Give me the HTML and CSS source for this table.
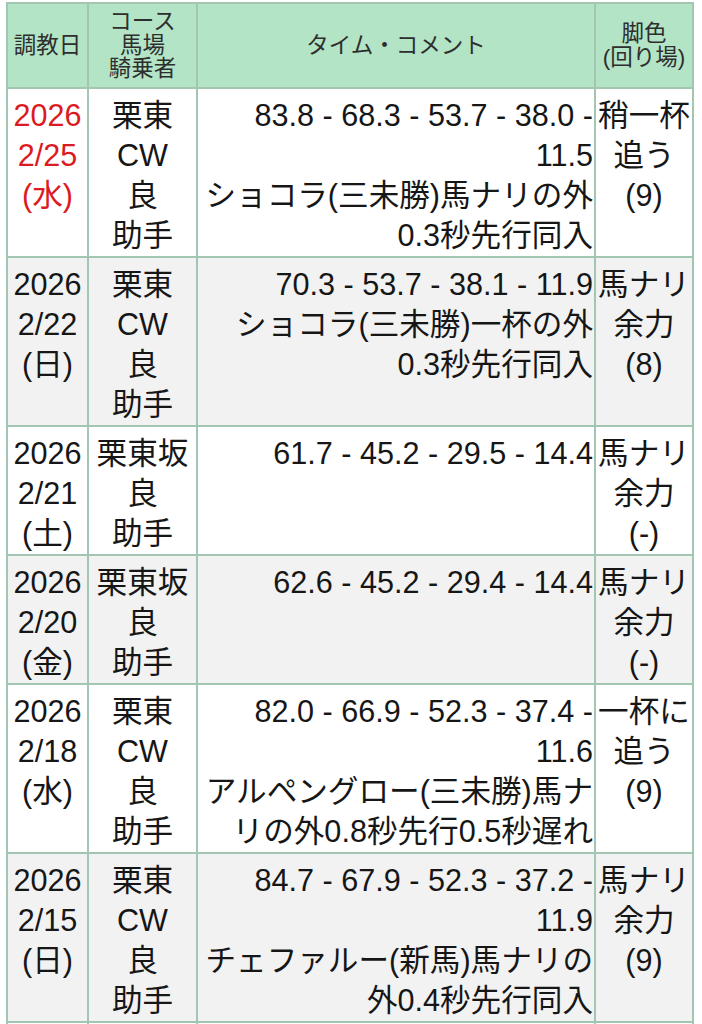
FILE: index.html
```html
<!DOCTYPE html>
<html lang="ja">
<head>
<meta charset="utf-8">
<title>調教</title>
<link rel="stylesheet" href="styles.css">
</head>
<body>
<table class="chokyo">
  <colgroup>
    <col class="c-date">
    <col class="c-course">
    <col class="c-time">
    <col class="c-ashi">
  </colgroup>
  <thead>
    <tr>
      <th>調教日</th>
      <th>コース<br>馬場<br>騎乗者</th>
      <th>タイム・コメント</th>
      <th>脚色<br>(回り場)</th>
    </tr>
  </thead>
  <tbody>
    <tr>
      <td class="date latest">2026<br>2/25<br>(水)</td>
      <td class="course">栗東<br>CW<br>良<br>助手</td>
      <td class="time">83.8 - 68.3 - 53.7 - 38.0 - 11.5<br>ショコラ(三未勝)馬ナリの外0.3秒先行同入</td>
      <td class="ashi">稍一杯<br>追う<br>(9)</td>
    </tr>
    <tr>
      <td class="date">2026<br>2/22<br>(日)</td>
      <td class="course">栗東<br>CW<br>良<br>助手</td>
      <td class="time">70.3 - 53.7 - 38.1 - 11.9<br>ショコラ(三未勝)一杯の外0.3秒先行同入</td>
      <td class="ashi">馬ナリ<br>余力<br>(8)</td>
    </tr>
    <tr>
      <td class="date">2026<br>2/21<br>(土)</td>
      <td class="course">栗東坂<br>良<br>助手</td>
      <td class="time">61.7 - 45.2 - 29.5 - 14.4</td>
      <td class="ashi">馬ナリ<br>余力<br>(-)</td>
    </tr>
    <tr>
      <td class="date">2026<br>2/20<br>(金)</td>
      <td class="course">栗東坂<br>良<br>助手</td>
      <td class="time">62.6 - 45.2 - 29.4 - 14.4</td>
      <td class="ashi">馬ナリ<br>余力<br>(-)</td>
    </tr>
    <tr>
      <td class="date">2026<br>2/18<br>(水)</td>
      <td class="course">栗東<br>CW<br>良<br>助手</td>
      <td class="time">82.0 - 66.9 - 52.3 - 37.4 - 11.6<br>アルペングロー(三未勝)馬ナリの外0.8秒先行0.5秒遅れ</td>
      <td class="ashi">一杯に<br>追う<br>(9)</td>
    </tr>
    <tr>
      <td class="date">2026<br>2/15<br>(日)</td>
      <td class="course">栗東<br>CW<br>良<br>助手</td>
      <td class="time">84.7 - 67.9 - 52.3 - 37.2 - 11.9<br>チェファルー(新馬)馬ナリの外0.4秒先行同入</td>
      <td class="ashi">馬ナリ<br>余力<br>(9)</td>
    </tr>
    <tr>
      <td class="date">2026<br>2/12<br>(木)</td>
      <td class="course">栗東坂<br>良<br>助手</td>
      <td class="time">60.9 - 44.8 - 29.3 - 14.5</td>
      <td class="ashi">馬ナリ<br>余力<br>(-)</td>
    </tr>
  </tbody>
</table>
</body>
</html>
```
FILE: styles.css
```css
html, body {
  margin: 0;
  padding: 0;
  background: #ffffff;
}

body {
  padding: 2px 0 0 6px;
  font-family: "Liberation Sans", "Noto Sans CJK JP", sans-serif;
  color: #161616;
}

.chokyo {
  table-layout: fixed;
  width: 688px;
  border-collapse: separate;
  border-spacing: 0;
  border-top: 2px solid #a2c6b2;
  border-left: 2px solid #a2c6b2;
}

.c-date { width: 81px; }
.c-course { width: 109px; }
.c-time { width: 398px; }
.c-ashi { width: 98px; }

.chokyo th,
.chokyo td {
  border-right: 2px solid #a2c6b2;
  border-bottom: 2px solid #a2c6b2;
}

.chokyo th {
  height: 85px;
  box-sizing: border-box;
  background: #b3e4c6;
  color: #2e2e2e;
  font-weight: normal;
  font-size: 22.5px;
  line-height: 23.5px;
  padding: 5px 1px;
  text-align: center;
  vertical-align: middle;
}

.chokyo td {
  font-size: 30.6px;
  line-height: 40px;
  padding: 6px 1px 1px 1px;
  vertical-align: top;
}

.chokyo tbody tr:nth-child(even) td {
  background: #f2f2f2;
}

.date,
.course,
.ashi {
  text-align: center;
}

.time {
  text-align: right;
}

.chokyo td.time {
  padding-left: 3px;
}

.latest {
  color: #dc1a22;
}
```
